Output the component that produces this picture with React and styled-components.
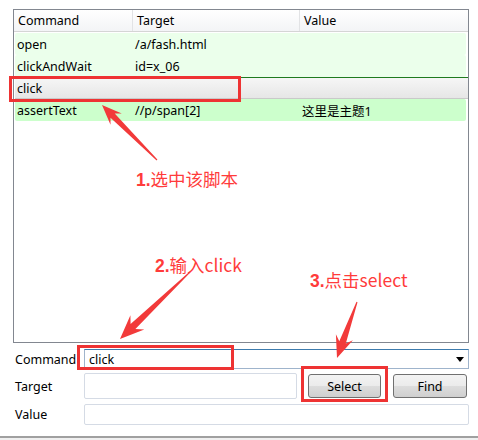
import React from "react";
import styled, { createGlobalStyle } from "styled-components";

const Global = createGlobalStyle`
  html, body { margin: 0; padding: 0; background: #fff; }
  body { font-family: "Noto Sans", "Noto Sans CJK SC", sans-serif; font-size: 12px; color: #000; }
`;

const Page = styled.div`
  position: relative;
  width: 478px;
  height: 440px;
  overflow: hidden;
  background: #fff;
`;

const Frame = styled.div`
  margin: 9px 0 0 13px;
  width: 454px;
  height: 332px;
  border: 1px solid #828790;
  display: flex;
  flex-direction: column;
`;

const Header = styled.div`
  display: grid;
  grid-template-columns: 119px 167px 1fr;
  height: 21px;
  border-bottom: 1px solid #d5d5d5;
  background: linear-gradient(#ffffff, #f3f4f6);
`;

const HeadCell = styled.div`
  display: flex;
  align-items: center;
  padding-left: 4px;
  border-right: ${(p) => (p.$last ? "none" : "1px solid #e2e3e5")};
  font-size: 12.5px;
`;

const Body = styled.div`
  padding: 1px 1px 0 1px;
  display: flex;
  flex-direction: column;
`;

const rowBg = {
  green: "#ebffeb",
  dark: "#ccffcc",
  sel: "linear-gradient(#f6f6f6, #e6e6e6)",
};

const Row = styled.div`
  display: grid;
  grid-template-columns: 118px 167px 1fr;
  height: 22px;
  box-sizing: border-box;
  background: ${(p) => rowBg[p.$kind]};
  border-top: ${(p) => (p.$kind === "sel" ? "1px solid #1f7a1f" : "none")};
  border-bottom: ${(p) => (p.$kind === "sel" ? "1px solid #c9c9c9" : "none")};
  margin-right: ${(p) => (p.$kind === "sel" ? "-1px" : "1px")};
  border-radius: ${(p) => (p.$kind === "sel" ? "0" : "2px")};
`;

const Cell = styled.div`
  display: flex;
  align-items: center;
  padding-left: 2px;
  font-size: 12.5px;
  white-space: nowrap;
`;

const Form = styled.div`
  display: flex;
  flex-direction: column;
  padding: 6px 9px 0 15px;
`;

const FormRow = styled.div`
  display: flex;
  align-items: center;
  height: ${(p) => p.$h}px;
  margin-bottom: ${(p) => p.$mb || 0}px;
`;

const Label = styled.div`
  width: 69px;
  font-size: 12.5px;
  flex: none;
`;

const Combo = styled.div`
  flex: 1;
  height: 20px;
  box-sizing: border-box;
  border: 1px solid #9fb4cc;
  border-top-color: #3d7bad;
  background: #fff;
  display: flex;
  align-items: center;
  padding-left: 4px;
  font-size: 12.5px;
  position: relative;
`;

const Caret = styled.span`
  margin-left: auto;
  margin-right: 4px;
  width: 0;
  height: 0;
  border-left: 4px solid transparent;
  border-right: 4px solid transparent;
  border-top: 5px solid #000;
`;

const Input = styled.div`
  flex: ${(p) => (p.$w ? "none" : "1")};
  width: ${(p) => (p.$w ? p.$w + "px" : "auto")};
  height: ${(p) => p.$h}px;
  box-sizing: border-box;
  border: 1px solid #d5dbe5;
  border-radius: 2px;
  background: #fff;
`;

const Button = styled.div`
  width: ${(p) => p.$w}px;
  height: 24px;
  margin-left: ${(p) => p.$ml}px;
  box-sizing: border-box;
  border: 1px solid #707070;
  border-radius: 3px;
  background: linear-gradient(#f3f3f3 0%, #ebebeb 50%, #dddddd 51%, #cfcfcf 100%);
  display: flex;
  align-items: center;
  justify-content: center;
  font-size: 12.5px;
  flex: none;
`;

const BottomBar = styled.div`
  position: absolute;
  left: 0;
  right: 0;
  top: 436px;
  height: 4px;
  border-top: 2px solid #a0a0a0;
  background: #f0f0f0;
`;

const Mark = styled.div`
  position: absolute;
  left: ${(p) => p.$x}px;
  top: ${(p) => p.$y}px;
  width: ${(p) => p.$w}px;
  height: ${(p) => p.$h}px;
  box-sizing: border-box;
  border: 3px solid #ee3333;
  pointer-events: none;
`;

const Note = styled.div`
  position: absolute;
  left: ${(p) => p.$x}px;
  top: ${(p) => p.$y}px;
  color: #ff3b3b;
  font-size: 17.5px;
  line-height: 20px;
  white-space: nowrap;
  font-family: "Noto Sans CJK SC", sans-serif;
`;

const Num = styled.span`
  font-weight: bold;
  font-family: "Liberation Sans", sans-serif;
`;

const Overlay = styled.svg`
  position: absolute;
  left: 0;
  top: 0;
  pointer-events: none;
`;

function arrowPoints(tx, ty, hx, hy, tailW, neckW, headW, headL) {
  const dx = hx - tx, dy = hy - ty;
  const len = Math.hypot(dx, dy);
  const ux = dx / len, uy = dy / len;
  const nx = -uy, ny = ux;
  const bx = hx - ux * headL, by = hy - uy * headL;
  const nbx = hx - ux * (headL * 0.75), nby = hy - uy * (headL * 0.75);
  const p = (x, y) => `${x.toFixed(1)},${y.toFixed(1)}`;
  return [
    p(tx + nx * tailW / 2, ty + ny * tailW / 2),
    p(nbx + nx * neckW / 2, nby + ny * neckW / 2),
    p(bx + nx * headW / 2, by + ny * headW / 2),
    p(hx, hy),
    p(bx - nx * headW / 2, by - ny * headW / 2),
    p(nbx - nx * neckW / 2, nby - ny * neckW / 2),
    p(tx - nx * tailW / 2, ty - ny * tailW / 2),
  ].join(" ");
}

const rows = [
  { kind: "green", c: ["open", "/a/fash.html", ""] },
  { kind: "green", c: ["clickAndWait", "id=x_06", ""] },
  { kind: "sel", c: ["click", "", ""] },
  { kind: "dark", c: ["assertText", "//p/span[2]", "这里是主题1"] },
];

export default function App() {
  return (
    <Page>
      <Global />
      <Frame>
        <Header>
          <HeadCell>Command</HeadCell>
          <HeadCell>Target</HeadCell>
          <HeadCell $last>Value</HeadCell>
        </Header>
        <Body>
          {rows.map((r, i) => (
            <Row key={i} $kind={r.kind}>
              {r.c.map((t, j) => (
                <Cell key={j}>{t}</Cell>
              ))}
            </Row>
          ))}
        </Body>
      </Frame>
      <Form>
        <FormRow $h={20} $mb={4}>
          <Label>Command</Label>
          <Combo>
            click
            <Caret />
          </Combo>
        </FormRow>
        <FormRow $h={26} $mb={5}>
          <Label>Target</Label>
          <Input $w={213} $h={26} />
          <Button $w={73} $ml={11}>Select</Button>
          <Button $w={74} $ml={12}>Find</Button>
        </FormRow>
        <FormRow $h={21}>
          <Label>Value</Label>
          <Input $h={21} />
        </FormRow>
      </Form>
      <BottomBar />

      <Mark $x={9} $y={76} $w={232} $h={26} />
      <Mark $x={77} $y={345} $w={157} $h={25} />
      <Mark $x={301} $y={366} $w={87} $h={36} />

      <Note $x={136} $y={169}><Num>1.</Num>选中该脚本</Note>
      <Note $x={155} $y={255}><Num>2.</Num>输入click</Note>
      <Note $x={310} $y={270}><Num>3.</Num>点击select</Note>

      <Overlay width="478" height="440" viewBox="0 0 478 440">
        <polygon fill="#f23a3a" points={arrowPoints(157, 160, 102, 105, 1, 6, 16, 20)} />
        <polygon fill="#f23a3a" points={arrowPoints(190, 272, 120, 339, 1, 7, 20, 24)} />
        <polygon fill="#f23a3a" points={arrowPoints(357, 302, 337, 358, 1, 7, 18, 22)} />
      </Overlay>
    </Page>
  );
}
